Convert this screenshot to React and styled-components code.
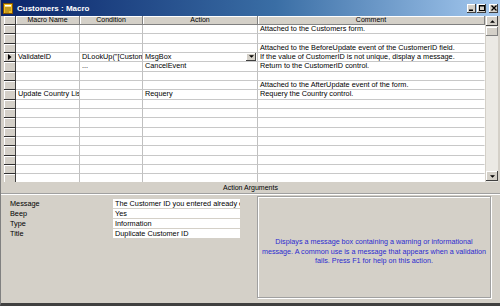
import React from 'react';
import styled, { createGlobalStyle } from 'styled-components';

const GlobalStyle = createGlobalStyle`
  body {
    margin: 0;
    background: #d4d0c8;
    font-family: "Liberation Sans", Arial, sans-serif;
  }
`;

const Window = styled.div`
  width: 500px;
  height: 306px;
  box-sizing: border-box;
  background: #d4d0c8;
  display: flex;
  flex-direction: column;
  border-left: 1px solid #808080;
  border-bottom: 3px solid #404040;
  overflow: hidden;
`;

const TitleBar = styled.div`
  height: 16px;
  flex: none;
  display: flex;
  align-items: center;
  gap: 4px;
  padding: 0 2px;
  background: linear-gradient(to right, #0a246a 0%, #3a6ea5 55%, #a6caf0 100%);
`;

const Title = styled.span`
  flex: 1;
  color: #fff;
  font-weight: bold;
  font-size: 8px;
`;

const TitleButtons = styled.div`
  display: flex;
  gap: 1px;
`;

const CaptionButton = styled.div`
  width: 9px;
  height: 9px;
  margin-left: ${(p) => (p.$gap ? '2px' : '0')};
  background: #d4d0c8;
  box-shadow: inset -1px -1px #404040, inset 1px 1px #fff;
  display: flex;
  align-items: center;
  justify-content: center;
`;

const GridArea = styled.div`
  height: 166px;
  flex: none;
  display: flex;
  padding-left: 3px;
  padding-right: 2px;
  overflow: hidden;
`;

const Grid = styled.div`
  flex: 1;
  background: #fff;
  overflow: hidden;
`;

const Row = styled.div`
  display: grid;
  grid-template-columns: 12px 64px 63px 115px 1fr;
  height: ${(p) => (p.$header ? '9px' : '9.33px')};
`;

const Selector = styled.div`
  box-sizing: border-box;
  background: #d4d0c8;
  border-bottom: 1px solid #303030;
  border-right: 1px solid #404040;
  box-shadow: inset 1px 1px #fff;
  display: flex;
  align-items: center;
  justify-content: center;
`;

const HeadCell = styled.div`
  box-sizing: border-box;
  background: #d4d0c8;
  border-bottom: 1px solid #808080;
  border-right: 1px solid #808080;
  box-shadow: inset 1px 1px #fff;
  font-size: 7px;
  line-height: 8px;
  text-align: center;
  color: #000;
  white-space: nowrap;
  overflow: hidden;
`;

const Cell = styled.div`
  position: relative;
  box-sizing: border-box;
  border-bottom: 1px solid #c8c8c8;
  border-right: 1px solid ${(p) => (p.$last ? '#fff' : '#c0c0c0')};
  font-size: 7.3px;
  line-height: 8.5px;
  padding-left: 2px;
  color: #000;
  white-space: nowrap;
  overflow: hidden;
`;

const DropButton = styled.div`
  position: absolute;
  right: 1px;
  top: 0;
  width: 10px;
  height: 8px;
  background: #d4d0c8;
  box-shadow: inset -1px -1px #404040, inset 1px 1px #fff;
  display: flex;
  align-items: center;
  justify-content: center;
`;

const ScrollBar = styled.div`
  width: 12px;
  display: flex;
  flex-direction: column;
  background: #ebe9e4;
  margin-left: 1px;
`;

const ScrollButton = styled.div`
  height: 10px;
  flex: none;
  background: #d4d0c8;
  box-shadow: inset -1px -1px #404040, inset 1px 1px #fff;
  display: flex;
  align-items: center;
  justify-content: center;
  margin-top: ${(p) => (p.$push ? 'auto' : '0')};
  margin-bottom: ${(p) => (p.$push ? '1px' : '0')};
`;

const Thumb = styled.div`
  height: 9px;
  margin-top: 1px;
  background: #d4d0c8;
  box-shadow: inset -1px -1px #808080, inset 1px 1px #fff;
`;

const ArgsBar = styled.div`
  height: 11px;
  flex: none;
  font-size: 7px;
  line-height: 11px;
  text-align: center;
  color: #000;
  border-bottom: 1px solid #a0a0a0;
  box-shadow: 0 1px #fff;
`;

const ArgsBody = styled.div`
  height: 108px;
  flex: none;
  display: flex;
  align-items: flex-start;
  padding: 2px 8px 0 9px;
  gap: 16px;
`;

const ArgsTable = styled.div`
  width: 231px;
  flex: none;
  display: grid;
  grid-template-columns: 103px 127px;
  grid-auto-rows: 9px;
  row-gap: 1px;
  padding-top: 3px;
`;

const ArgLabel = styled.div`
  font-size: 7.3px;
  line-height: 9px;
  color: #000;
`;

const ArgValue = styled.div`
  background: #fff;
  font-size: 7.3px;
  line-height: 9px;
  padding-left: 2px;
  color: #000;
  white-space: nowrap;
  overflow: hidden;
`;

const Description = styled.div`
  width: 234px;
  height: 102px;
  flex: none;
  box-sizing: border-box;
  border: 1px solid #a0a0a0;
  box-shadow: inset 1px 1px #fff, 1px 1px #fff;
  padding: 40px 1px 0;
  text-align: center;
  font-size: 7.2px;
  line-height: 9.5px;
  color: #2b2bd0;
`;

const Arrow = ({ dir = 'down', size = 5 }) => (
  <svg width={size} height={size} viewBox="0 0 6 6">
    {dir === 'down' && <path d="M0 1.5 H6 L3 4.5 Z" fill="#000" />}
    {dir === 'up' && <path d="M0 4.5 H6 L3 1.5 Z" fill="#000" />}
    {dir === 'right' && <path d="M1 0 V6 L4.5 3 Z" fill="#000" />}
  </svg>
);

const MacroIcon = () => (
  <svg width="10" height="11" viewBox="0 0 10 11">
    <rect x="0.5" y="0.5" width="9" height="10" fill="#f0c020" stroke="#805000" />
    <rect x="2" y="2" width="6" height="1.5" fill="#fff" />
    <path d="M2 5 H8 M2 7 H8 M2 9 H6" stroke="#806020" strokeWidth="0.8" />
  </svg>
);

const rows = [
  { comment: 'Attached to the Customers form.' },
  {},
  { comment: 'Attached to the BeforeUpdate event of the CustomerID field.' },
  {
    current: true,
    name: 'ValidateID',
    condition: 'DLookUp("[CustomerID]","Customers")',
    action: 'MsgBox',
    comment: 'If the value of CustomerID is not unique, display a message.',
  },
  { condition: '...', action: 'CancelEvent', comment: 'Return to the CustomerID control.' },
  {},
  { comment: 'Attached to the AfterUpdate event of the form.' },
  { name: 'Update Country List', action: 'Requery', comment: 'Requery the Country control.' },
  {}, {}, {}, {}, {}, {}, {}, {}, {},
];

const args = [
  ['Message', 'The Customer ID you entered already exists.'],
  ['Beep', 'Yes'],
  ['Type', 'Information'],
  ['Title', 'Duplicate Customer ID'],
];

const App = () => (
  <>
    <GlobalStyle />
    <Window>
      <TitleBar>
        <MacroIcon />
        <Title>Customers : Macro</Title>
        <TitleButtons>
          <CaptionButton>
            <svg width="5" height="5" viewBox="0 0 5 5"><rect x="0" y="3.5" width="4" height="1.5" fill="#000" /></svg>
          </CaptionButton>
          <CaptionButton>
            <svg width="6" height="6" viewBox="0 0 6 6"><rect x="0.5" y="0.5" width="5" height="5" fill="none" stroke="#000" /><rect x="0" y="0" width="6" height="1.5" fill="#000" /></svg>
          </CaptionButton>
          <CaptionButton $gap>
            <svg width="6" height="6" viewBox="0 0 6 6"><path d="M0.5 0.5 L5.5 5.5 M5.5 0.5 L0.5 5.5" stroke="#000" strokeWidth="1.3" /></svg>
          </CaptionButton>
        </TitleButtons>
      </TitleBar>

      <GridArea>
        <Grid>
          <Row $header>
            <Selector />
            <HeadCell>Macro Name</HeadCell>
            <HeadCell>Condition</HeadCell>
            <HeadCell>Action</HeadCell>
            <HeadCell>Comment</HeadCell>
          </Row>
          {rows.map((r, i) => (
            <Row key={i}>
              <Selector>{r.current && <Arrow dir="right" size={6} />}</Selector>
              <Cell>{r.name}</Cell>
              <Cell>{r.condition}</Cell>
              <Cell>
                {r.action}
                {r.current && (
                  <DropButton>
                    <Arrow dir="down" size={5} />
                  </DropButton>
                )}
              </Cell>
              <Cell $last>{r.comment}</Cell>
            </Row>
          ))}
        </Grid>
        <ScrollBar>
          <ScrollButton>
            <Arrow dir="up" size={5} />
          </ScrollButton>
          <Thumb />
          <ScrollButton $push>
            <Arrow dir="down" size={5} />
          </ScrollButton>
        </ScrollBar>
      </GridArea>

      <ArgsBar>Action Arguments</ArgsBar>

      <ArgsBody>
        <ArgsTable>
          {args.map(([label, value]) => (
            <React.Fragment key={label}>
              <ArgLabel>{label}</ArgLabel>
              <ArgValue>{value}</ArgValue>
            </React.Fragment>
          ))}
        </ArgsTable>
        <Description>
          Displays a message box containing a warning or informational message. A common use is a
          message that appears when a validation fails. Press F1 for help on this action.
        </Description>
      </ArgsBody>
    </Window>
  </>
);

export default App;
